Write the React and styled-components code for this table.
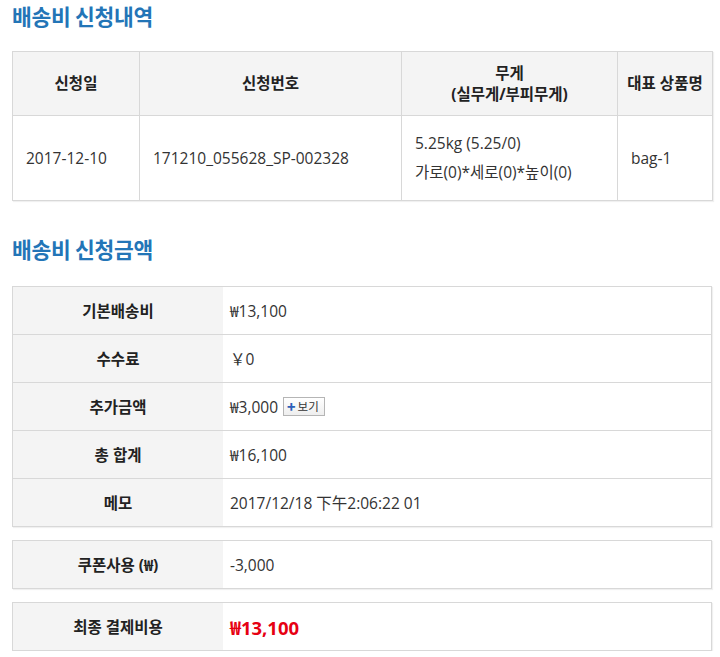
import React from "react";
import styled, { createGlobalStyle } from "styled-components";

const Global = createGlobalStyle`
  html, body { margin: 0; padding: 0; background: #fff; }
  body { font-family: "Open Sans", "Noto Sans CJK KR", sans-serif; color: #333; }
`;

const Page = styled.div`
  width: 700px;
  padding: 0 8px 0 12px;
`;

const Title = styled.h2`
  margin: 0;
  font-family: "Noto Sans CJK KR", sans-serif;
  font-size: 21.5px;
  line-height: 32px;
  font-weight: 700;
  color: #2375b7;
  letter-spacing: -0.3px;
  margin-top: ${(p) => p.$top || 0}px;
`;

const Table = styled.table`
  width: 100%;
  border-collapse: collapse;
  table-layout: fixed;
  border: 1px solid #cdcdcd;
  box-shadow: 1px 1px 1px rgba(0, 0, 0, 0.06);
  margin-top: ${(p) => p.$top || 0}px;
  font-size: 15.5px;
`;

const Th = styled.th`
  background: #f4f4f4;
  border: 1px solid #d8d8d8;
  font-weight: 700;
  font-size: 15.5px;
  color: #222;
  height: ${(p) => p.$h || 48}px;
  padding: 0;
  line-height: 21px;
  text-align: center;
`;

const Td = styled.td`
  border: 1px solid #d8d8d8;
  height: ${(p) => p.$h || 48}px;
  padding: 0 0 0 ${(p) => p.$pl || 13}px;
  color: #333;
  text-align: left;
  vertical-align: middle;
`;

const Lines = styled.div`
  line-height: 29px;
`;

const Label = styled.th`
  background: #f4f4f4;
  border: 1px solid #d8d8d8;
  border-right: none;
  width: 210px;
  height: 47px;
  font-weight: 700;
  font-size: 15.5px;
  color: #222;
  padding: 0;
  text-align: center;
`;

const Value = styled.td`
  border: 1px solid #d8d8d8;
  border-left: none;
  padding: 0 0 0 7px;
  color: ${(p) => (p.$red ? "#e60012" : "#333")};
  font-size: ${(p) => (p.$red ? 18.5 : 15.5)}px;
  font-weight: ${(p) => (p.$red ? 700 : 400)};
`;

const ViewBtn = styled.span`
  display: inline-flex;
  align-items: center;
  gap: 2px;
  margin-left: 5px;
  height: 17px;
  padding: 0 5px 0 3px;
  border: 1px solid #b5b5b5;
  background: linear-gradient(#fff, #eeeeee);
  font-family: "Noto Sans CJK KR", sans-serif;
  font-size: 11.5px;
  color: #333;
  vertical-align: 1px;
`;

const Plus = styled.span`
  color: #2d5fb8;
  font-weight: 900;
  font-size: 14px;
  line-height: 1;
`;

const amountRows = [
  ["기본배송비", "₩13,100"],
  ["수수료", "￥0"],
  ["추가금액", "₩3,000", true],
  ["총 합계", "₩16,100"],
  ["메모", "2017/12/18 下午2:06:22 01"],
];

export default function App() {
  return (
    <Page>
      <Global />
      <Title>배송비 신청내역</Title>
      <Table $top={19}>
        <colgroup>
          <col style={{ width: 127 }} />
          <col style={{ width: 262 }} />
          <col style={{ width: 216 }} />
          <col style={{ width: 95 }} />
        </colgroup>
        <thead>
          <tr>
            <Th $h={63}>신청일</Th>
            <Th $h={63}>신청번호</Th>
            <Th $h={63}>
              무게
              <br />
              (실무게/부피무게)
            </Th>
            <Th $h={63}>대표 상품명</Th>
          </tr>
        </thead>
        <tbody>
          <tr>
            <Td $h={84}>2017-12-10</Td>
            <Td $h={84}>171210_055628_SP-002328</Td>
            <Td $h={84}>
              <Lines>
                5.25kg (5.25/0)
                <br />
                가로(0)*세로(0)*높이(0)
              </Lines>
            </Td>
            <Td $h={84}>bag-1</Td>
          </tr>
        </tbody>
      </Table>

      <Title $top={32}>배송비 신청금액</Title>
      <Table $top={21}>
        <tbody>
          {amountRows.map(([k, v, btn]) => (
            <tr key={k}>
              <Label>{k}</Label>
              <Value>
                {v}
                {btn && (
                  <ViewBtn>
                    <Plus>+</Plus>보기
                  </ViewBtn>
                )}
              </Value>
            </tr>
          ))}
        </tbody>
      </Table>

      <Table $top={13}>
        <tbody>
          <tr>
            <Label>쿠폰사용 (₩)</Label>
            <Value>-3,000</Value>
          </tr>
        </tbody>
      </Table>

      <Table $top={13}>
        <tbody>
          <tr>
            <Label>최종 결제비용</Label>
            <Value $red>₩13,100</Value>
          </tr>
        </tbody>
      </Table>
    </Page>
  );
}
